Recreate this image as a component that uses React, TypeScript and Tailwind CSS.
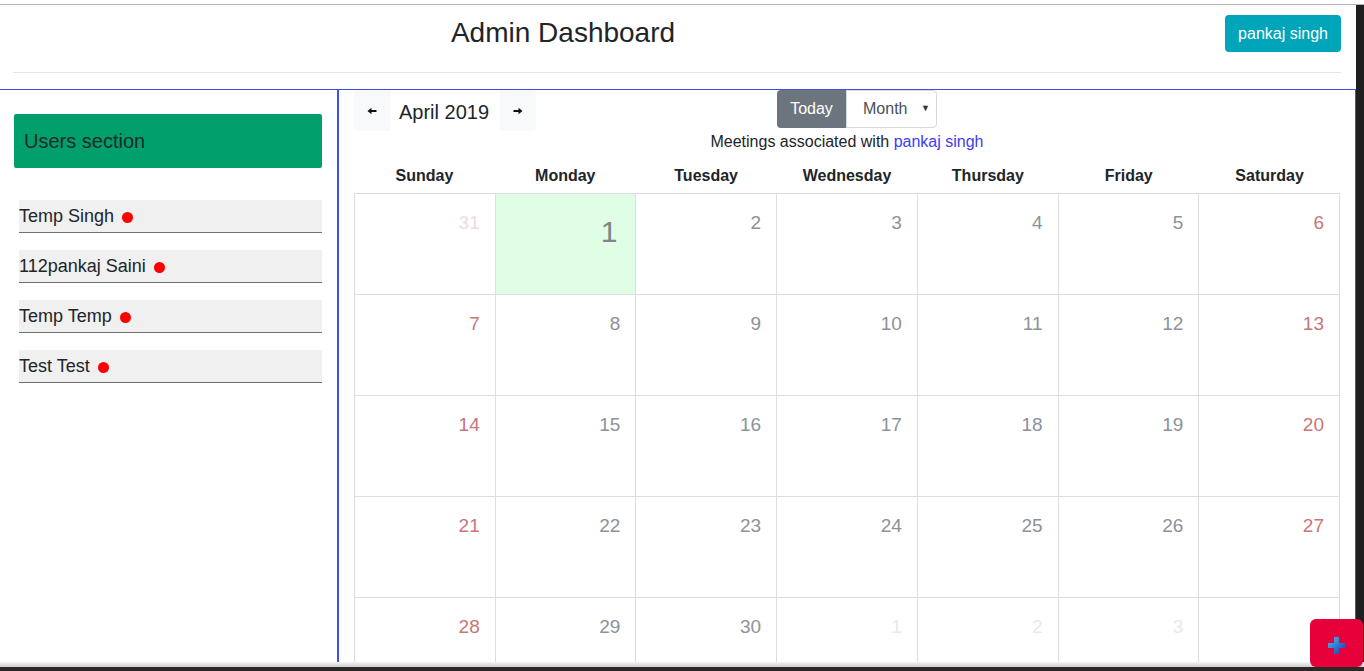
import React from "react";

type Cell = { n: number; kind: "wd" | "we" | "offPrev" | "offNext" | "today" };

const weeks: Cell[][] = (() => {
  const rows: Cell[][] = [];
  const first: Cell[] = [
    { n: 31, kind: "offPrev" },
    { n: 1, kind: "today" },
  ];
  let d = 2;
  for (let i = 2; i < 7; i++) first.push({ n: d++, kind: i === 6 ? "we" : "wd" });
  rows.push(first);
  for (let r = 0; r < 3; r++) {
    const row: Cell[] = [];
    for (let i = 0; i < 7; i++) row.push({ n: d++, kind: i === 0 || i === 6 ? "we" : "wd" });
    rows.push(row);
  }
  const last: Cell[] = [
    { n: 28, kind: "we" },
    { n: 29, kind: "wd" },
    { n: 30, kind: "wd" },
    { n: 1, kind: "offNext" },
    { n: 2, kind: "offNext" },
    { n: 3, kind: "offNext" },
    { n: 4, kind: "offNext" },
  ];
  rows.push(last);
  return rows;
})();

const days = ["Sunday", "Monday", "Tuesday", "Wednesday", "Thursday", "Friday", "Saturday"];
const users = ["Temp Singh", "112pankaj Saini", "Temp Temp", "Test Test"];

function Arrow({ dir }: { dir: "left" | "right" }) {
  return (
    <svg width="10" height="8" viewBox="0 0 10 8" className={dir === "right" ? "rotate-180" : ""}>
      <path d="M0.5 4 L4.5 0.8 L4.5 3 L9.5 3 L9.5 5 L4.5 5 L4.5 7.2 Z" fill="#111" />
    </svg>
  );
}

function DayCell({ c }: { c: Cell }) {
  if (c.kind === "today") {
    return (
      <div className="h-[101px] border-r border-b border-[#dddddd] bg-[#e0fde5] pr-[18px] pt-[23px] text-right text-[30px] leading-[30px] text-[#7f858b]">
        {c.n}
      </div>
    );
  }
  const color =
    c.kind === "we"
      ? "text-[#c87676]"
      : c.kind === "offPrev"
      ? "text-[#f2dada]"
      : c.kind === "offNext"
      ? "text-[#e9e9e9]"
      : "text-[#8d9298]";
  return (
    <div className={`h-[101px] border-r border-b border-[#dddddd] pr-[15px] pt-[18px] text-right text-[19px] leading-[22px] ${color}`}>
      {c.n}
    </div>
  );
}

export default function App() {
  return (
    <div className="relative w-[1364px] h-[671px] overflow-hidden bg-white flex flex-col font-['Liberation_Sans',Arial,sans-serif] text-[#212529]">
      <div className="h-[4px] shrink-0 bg-white" />
      <div className="h-px shrink-0 bg-[#b3b3b3]" />
      <div className="flex flex-1 min-h-0">
        <div className="w-[1356px] flex flex-col min-h-0">
          {/* header */}
          <div className="shrink-0 pl-[13px] pr-[15px]">
            <div className="flex items-start pt-[10px] h-[47px]">
              <div className="w-[1100px] text-center text-[28px] leading-[34px] mt-[1px]">Admin Dashboard</div>
              <button className="ml-auto h-[37px] w-[116px] rounded-[4px] bg-[#00a5ba] text-white text-[16px] leading-[20px]">
                pankaj singh
              </button>
            </div>
            <div className="mt-[20px] h-px bg-[#e3e3e3]" />
            <div className="h-[16px]" />
          </div>
          {/* body */}
          <div className="flex flex-1 min-h-0 border-t border-r border-[#3d4ff2] overflow-hidden">
            <div className="w-[338px] shrink-0 border-r border-[#3d4ff2] pl-[14px] pr-[15px]">
              <div className="mt-[24px] h-[54px] rounded-[2px] bg-[#009f6b] flex items-center pl-[10px] text-[20px] text-[#1f2a26]">
                Users section
              </div>
              <div className="mt-[32px] ml-[5px] flex flex-col gap-[17px]">
                {users.map((u) => (
                  <div key={u} className="h-[33px] bg-[#eff0ef] border-b border-[#6f6f6f] flex items-center text-[18px] leading-[22px] text-[#212529]">
                    <span>{u}</span>
                    <span className="ml-[8px] mt-[2px] inline-block w-[11px] h-[11px] rounded-full bg-[#ff0000]" />
                  </div>
                ))}
              </div>
            </div>
            <div className="flex-1 min-w-0 border-l border-[#3d4ff2] px-[15px] flex flex-col">
              {/* toolbar */}
              <div className="flex items-start h-[39px] shrink-0">
                <div className="flex items-center">
                  <div className="w-[36px] h-[41px] rounded-l-[4px] bg-[#f8f9fa] flex items-center justify-center">
                    <Arrow dir="left" />
                  </div>
                  <div className="w-[110px] pl-[9px] pt-[2px] text-[20px] leading-[24px] text-[#212529]">April 2019</div>
                  <div className="w-[36px] h-[41px] rounded-r-[4px] bg-[#f8f9fa] flex items-center justify-center">
                    <Arrow dir="right" />
                  </div>
                </div>
                <div className="ml-[241px] flex">
                  <div className="w-[69px] h-[38px] rounded-l-[4px] bg-[#6c757d] text-white text-[16px] flex items-center justify-center">
                    Today
                  </div>
                  <div className="w-[91px] h-[38px] rounded-r-[4px] border border-[#d6d9dc] flex items-center pl-[16px] pr-[6px] text-[16px] text-[#495057]">
                    <span>Month</span>
                    <span className="ml-auto text-[9px] text-[#333]">▼</span>
                  </div>
                </div>
              </div>
              <div className="shrink-0 pt-[1px] text-center text-[16px] leading-[24px] text-[#212529]">
                Meetings associated with <span className="text-[#3d3df5]">pankaj singh</span>
              </div>
              <div className="shrink-0 grid grid-cols-7 h-[39px] pt-[5px] items-center">
                {days.map((d) => (
                  <div key={d} className="text-center font-bold text-[16px] text-[#212529]">
                    {d}
                  </div>
                ))}
              </div>
              <div className="grid grid-cols-7 border-l border-t border-[#dddddd]">
                {weeks.flat().map((c, i) => (
                  <DayCell key={i} c={c} />
                ))}
              </div>
            </div>
          </div>
        </div>
        <div className="flex-1 bg-[#1f1f1f]" />
      </div>
      <div className="h-[5px] shrink-0 bg-gradient-to-b from-[#f5f5f5] to-[#cfcfcf]" />
      <div className="h-[4px] shrink-0 bg-[#2d2826]" />

      {/* floating action button */}
      <div className="absolute left-[1310px] top-[619px] z-10 w-[53px] h-[48px] rounded-[6px] bg-[#e8003b] flex items-center justify-center pt-[4px]">
        <svg width="17" height="17" viewBox="0 0 17 17">
          <defs>
            <linearGradient id="pg" x1="0" y1="0" x2="1" y2="1">
              <stop offset="0" stopColor="#45c0f0" />
              <stop offset="1" stopColor="#2233b0" />
            </linearGradient>
          </defs>
          <path d="M6 0 H11 V6 H17 V11 H11 V17 H6 V11 H0 V6 H6 Z" fill="url(#pg)" />
        </svg>
      </div>
    </div>
  );
}
